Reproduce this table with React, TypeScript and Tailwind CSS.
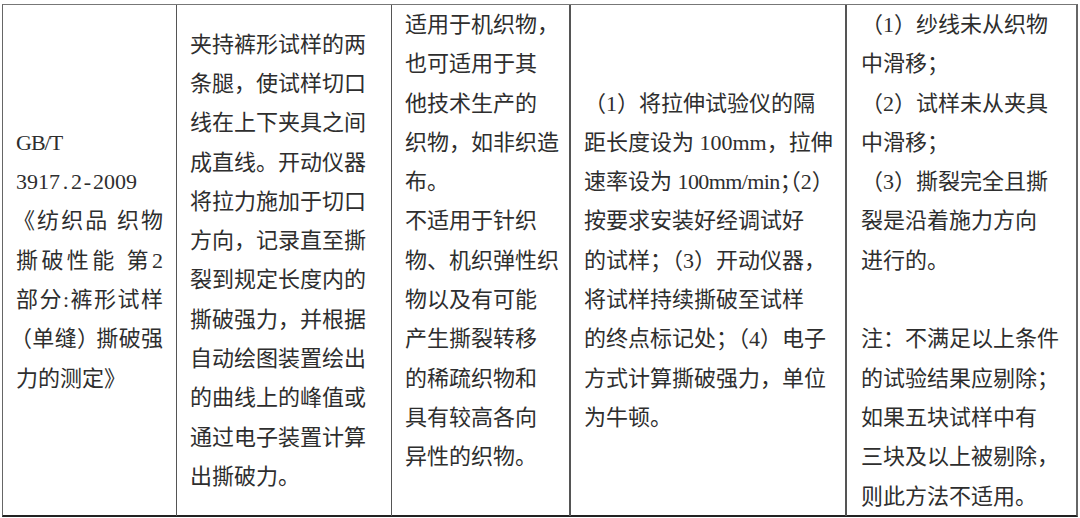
import React from 'react';

const col2 = [
  '夹持裤形试样的两',
  '条腿，使试样切口',
  '线在上下夹具之间',
  '成直线。开动仪器',
  '将拉力施加于切口',
  '方向，记录直至撕',
  '裂到规定长度内的',
  '撕破强力，并根据',
  '自动绘图装置绘出',
  '的曲线上的峰值或',
  '通过电子装置计算',
  '出撕破力。',
];

const col3 = [
  '适用于机织物，',
  '也可适用于其',
  '他技术生产的',
  '织物，如非织造',
  '布。',
  '不适用于针织',
  '物、机织弹性织',
  '物以及有可能',
  '产生撕裂转移',
  '的稀疏织物和',
  '具有较高各向',
  '异性的织物。',
];

const col4 = [
  '（1）将拉伸试验仪的隔',
  '距长度设为 100mm，拉伸',
  '速率设为 100mm/min；（2）',
  '按要求安装好经调试好',
  '的试样；（3）开动仪器，',
  '将试样持续撕破至试样',
  '的终点标记处；（4）电子',
  '方式计算撕破强力，单位',
  '为牛顿。',
];

const col5 = [
  '（1）纱线未从织物',
  '中滑移；',
  '（2）试样未从夹具',
  '中滑移；',
  '（3）撕裂完全且撕',
  '裂是沿着施力方向',
  '进行的。',
  '',
  '注：不满足以上条件',
  '的试验结果应剔除；',
  '如果五块试样中有',
  '三块及以上被剔除，',
  '则此方法不适用。',
];

// half-width cell for Latin punctuation, like the fixed-pitch Latin of the document font
const Half = ({ c }: { c: string }) => <span className="inline-block w-[11px] text-center">{c}</span>;

const justify = 'whitespace-nowrap h-[39.3px] text-justify [text-align-last:justify]';
const line = 'whitespace-nowrap h-[39.3px]';

function Lines({ lines }: { lines: string[] }) {
  return (
    <>
      {lines.map((l, i) => (
        <div key={i} className={line}>
          {l === '速率设为 100mm/min；（2）' ? (
            <>
              速率设为 <span className="tracking-[-0.6px]">100mm/min</span>
              <span className="tracking-[-12px]">；</span>（2）
            </>
          ) : (
            l
          )}
        </div>
      ))}
    </>
  );
}

export default function App() {
  return (
    <div
      className="w-[1080px] h-[518px] bg-white pt-[4px] pl-[2px] text-[22px] leading-[39.3px] text-[#2e2e2e]"
      style={{ fontFamily: '"Liberation Serif", "Noto Sans CJK SC", serif' }}
    >
      <div className="grid w-[1076px] grid-cols-[174px_215px_179px_276px_1fr] h-[513px] border-t border-l border-r-2 border-b-2 border-t-[#777] border-l-[#666] border-r-[#666] border-b-[#222]">
        {/* 标准编号 */}
        <div className="flex flex-col justify-center pl-[13px] pr-[13px] border-r border-[#555]">
          <div className={line}>
            <span className="tracking-[-1px]">GB/T</span>
          </div>
          <div className={line}>
            3917<Half c="." />2<Half c="-" />2009
          </div>
          <div className={justify}>
            <span className="-ml-[3px]">《</span>纺织品 织物
          </div>
          <div className={justify}>撕破性能 第2</div>
          <div className={justify}>部分:裤形试样</div>
          <div className={justify}>
            <span className="-ml-[6px]">（</span>单缝<span className="tracking-[-3px]">）</span>撕破强
          </div>
          <div className={line}>力的测定》</div>
        </div>
        <div className="flex flex-col justify-center pl-[13px] border-r border-[#555]">
          <Lines lines={col2} />
        </div>
        <div className="flex flex-col justify-start pl-[13px] border-r-2 border-[#555]">
          <Lines lines={col3} />
        </div>
        <div className="flex flex-col justify-center pl-[13px] border-r-2 border-[#555]">
          <Lines lines={col4} />
        </div>
        <div className="flex flex-col justify-start pl-[14px]">
          <Lines lines={col5} />
        </div>
      </div>
    </div>
  );
}
